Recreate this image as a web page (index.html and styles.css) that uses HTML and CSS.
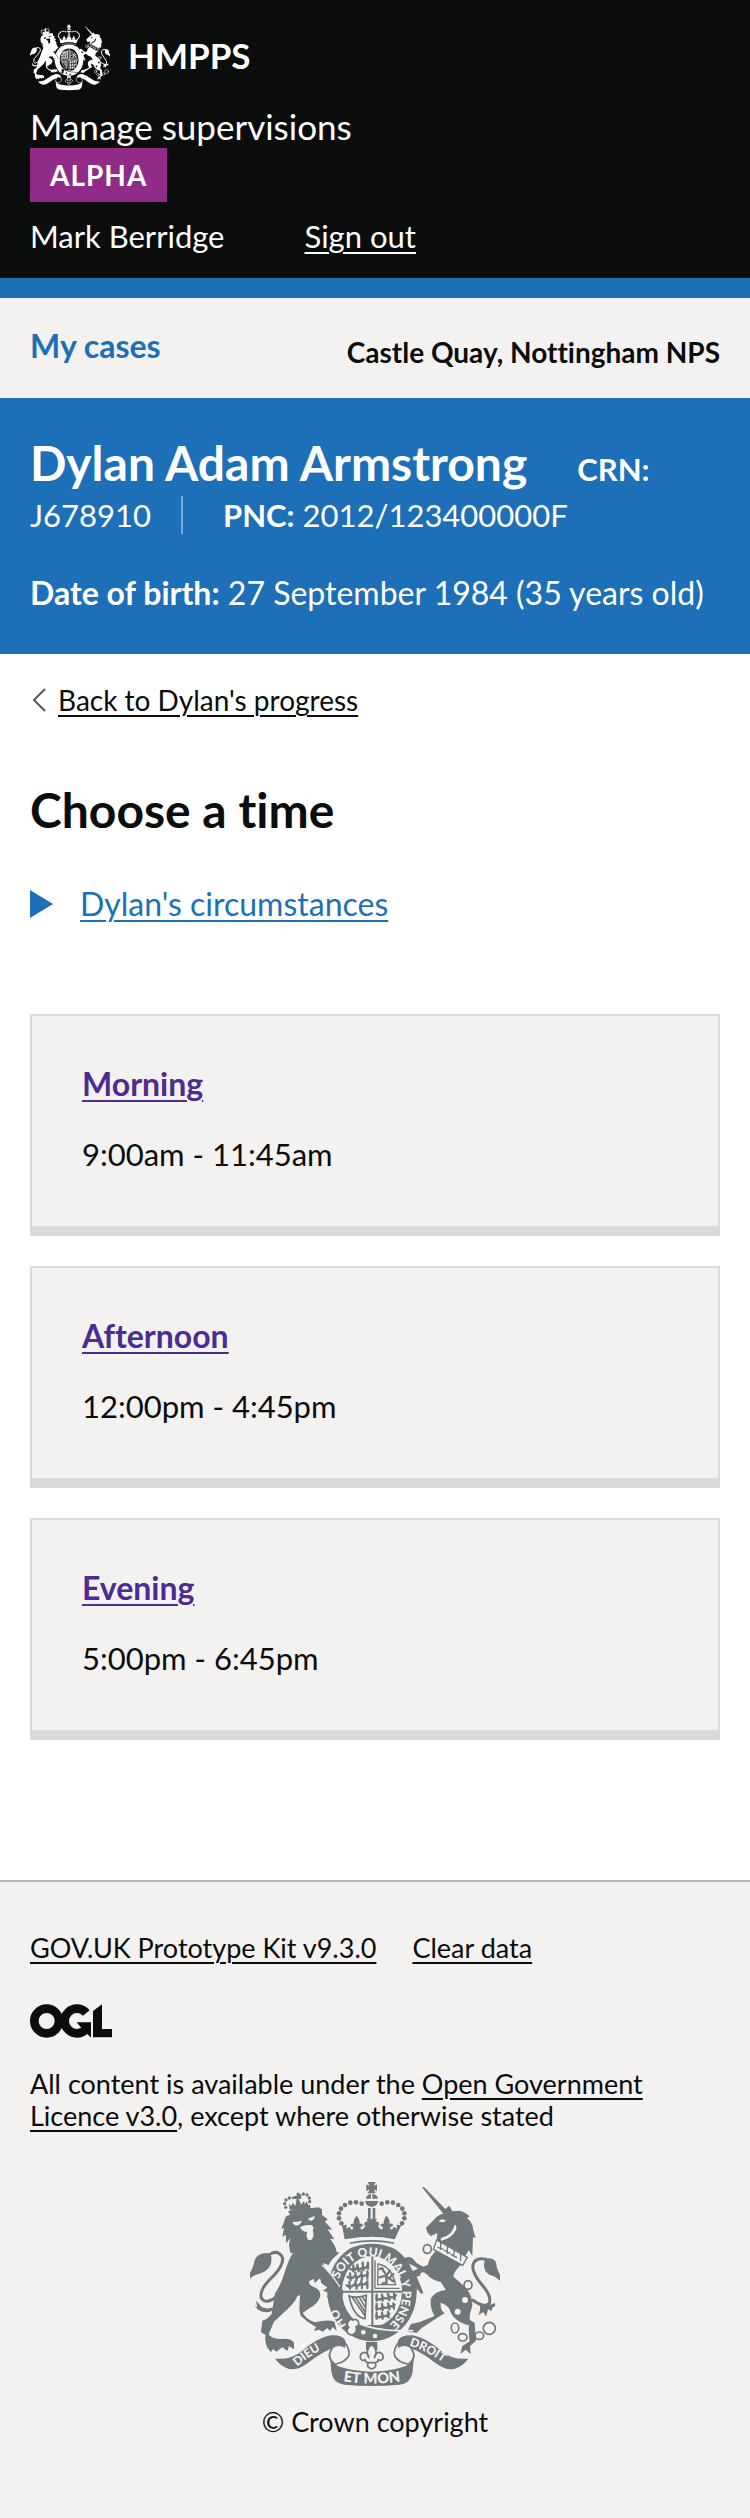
FILE: index.html
```html
<!DOCTYPE html>
<html lang="en">
<head>
<meta charset="utf-8">
<meta name="viewport" content="width=device-width, initial-scale=1">
<title>Choose a time - Manage supervisions</title>
<link rel="stylesheet" href="styles.css">
</head>
<body>
<svg class="sprite" aria-hidden="true">
  <defs>
    <symbol id="crest" viewBox="30 36 750 612">
      <g class="crest-ink">
        <!-- crown -->
        <path d="M383 36h24l-6 12 10-5v20l-10-5 6 12h-24l6-12-10 5V43l10 5zM378 86q1-12 15-15v15zM397 71q15 3 17 15h-17zM375 93h40q-3 16-20 18-17-2-20-18zM384 114h8v32h-8zM398 114h8v32h-8z"/>
        <g><circle cx="365" cy="101" r="7"/><circle cx="348" cy="97" r="7"/><circle cx="331" cy="98" r="7"/><circle cx="315" cy="105" r="7"/><circle cx="303" cy="116" r="7"/><circle cx="297" cy="130" r="7"/><circle cx="297" cy="145" r="7"/><circle cx="304" cy="160" r="7"/><circle cx="425" cy="101" r="7"/><circle cx="442" cy="97" r="7"/><circle cx="459" cy="98" r="7"/><circle cx="475" cy="105" r="7"/><circle cx="487" cy="116" r="7"/><circle cx="493" cy="130" r="7"/><circle cx="493" cy="145" r="7"/><circle cx="486" cy="160" r="7"/></g>
        <path d="M306 166l14-2-1 12 10-6q2 8 8 9 3-4 2-9-6 2-8-4 2-8 10-4-2-12 9-25 11 13 9 25 8-4 10 4-2 6-8 4 0 6 4 9 9-4 12-14l-4 2v-9q5-4 11-3l-5-9h32l-5 9q6-1 11 3v9l-4-2q3 10 12 14 4-3 4-9-6 2-8-4 2-8 10-4-2-12 9-25 11 13 9 25 8-4 10 4-2 6-8 4-1 5 2 9 6-1 8-9l10 6-1-12 14 2-20 42q-75-14-150 0z"/>
        <!-- belt -->
        <ellipse cx="396" cy="365" rx="134" ry="149"/>
      </g>
      <g class="crest-paper">
        <path d="M322 210q74-20 146 0 8 14 0 28-72-34-146 0-8-14 0-28z"/>
        <ellipse cx="396" cy="364" rx="90" ry="106"/>
        <circle cx="370" cy="487" r="7"/><circle cx="405" cy="498" r="7"/>
      </g>
      <path class="crest-line" d="M332 219q64-13 128 0" stroke-width="5"/>
      <!-- shield -->
      <path class="crest-line" d="M397 262v202M308 365h176M374 468h46" stroke-width="6"/>
      <path class="crest-line" d="M405 272v82M405 355h72M414 282q40 6 53 62h-54z" stroke-width="4"/>
      <g class="crest-line" stroke-width="7">
        <path d="M330 296q12 10 20-2 10 8 18-2 10 6 14-6M340 286v18M352 284l4 20M368 278l2 22M384 278v18"/>
        <path d="M322 320q12 10 22-2 10 8 18-2 14 6 22-6M330 310l2 20M346 308l4 22M364 304l2 24M382 304v22"/>
        <path d="M320 346q12 10 22-2 10 8 18-2 14 6 22-6M328 336l2 20M346 334l4 22M364 332l2 22M382 334v20"/>
        <path d="M408 384q12 10 20-2 12 8 20-2 12 6 20-4M410 374v18M426 374l2 18M444 372l4 18M462 372l2 16"/>
        <path d="M408 412q12 10 20-2 12 8 20-2 10 4 16-4M410 402v18M426 402l2 18M444 400l4 18M460 400l2 16"/>
        <path d="M408 438q12 8 20-2 10 6 20-4M410 428v18M426 428l2 18M444 426l2 16"/>
        <path d="M420 298q8-8 10 4l10 14 10-14M432 318l-14 4M438 318l2 20-12 2M442 322l18 12M452 320l8-8"/>
      </g>
      <path class="crest-line" d="M327 378q24 8 52-2l-4 70q-34-4-48-68zM338 384l36 52M348 384l27 42M358 382l18 30M367 380l10 16" stroke-width="5"/>
      <!-- lion -->
      <g class="crest-ink">
        <path d="M131 158l6-18q46-24 99-28l10 6v17l17 13-8 7 22 24-14-1 20 30-13-2q18 22 20 40l12 3q-22 10-36 36l-18-6 14 24q26 20 36 42l12 18-3 22-10-5 1 18-12-14-9 9-3-14-14 3 6-14-18-6 14-9-18-14-4-14-16 14-2-12-14 6q-4 12 18 20 18 8 14 28-6 20-32 34l-20 14q14 22 38 28 36-10 58-2l6 28-12-12-8 12-8-9-14 11-10-6-16 4 6-12q-24-12-46-34l-4-18 2-44-8 4q-10 24-38 46l-32 30-16 38q6 12 34 14 34-4 42 11v20l-15-10-5 15-15-11-18 13-10-8-6 10-12-15q-8-24-4-36l-14-10 4-34 14-6 14-14 10-62q20-30 28-60 12-40 26-62l-8 2-4-26 4-20-12 16-2-26-10 6 5-26-8 2 8-20z"/>
        <path d="M92 250q-36-6-48 20-4 24-14 38v18q8-10 26-14 26-8 34-24 6-14 4-28zM108 408q-20 12-42 4l-18-20 4 20-8-6q12 22 32 20 20 4 32-18z"/>
        <path d="M144 124q30-14 66-20l2 14q-32 4-62 16zM150 120l-4-18 8 6 4-10 8 10 4-20-8-2v-8h8v-10h8v10h6v8l-8 2 8 16 6-10 6 8 4-8 6 14z"/>
        <g><circle cx="137" cy="112" r="5"/><circle cx="134" cy="101" r="5"/><circle cx="138" cy="90" r="5"/><circle cx="148" cy="84" r="5"/><circle cx="159" cy="84" r="4"/><circle cx="180" cy="76" r="4"/><circle cx="190" cy="72" r="5"/><circle cx="201" cy="75" r="5"/><circle cx="208" cy="84" r="5"/><circle cx="209" cy="95" r="5"/></g>
      </g>
      <path class="crest-line" d="M94 250q24-10 34 14 2 22-26 52-46 42-38 68 14 22 48-6" stroke-width="9"/>
      <path class="crest-paper" d="M158 156q14 0 28-4-6 16-20 14-8-2-8-10zM204 146l20-8q0 12-10 14-8 0-10-6zM180 172q16-10 36-6 8 8 2 14 6 14-1 26-6 8-14 2-6-10-2-22-16-2-21-14z"/>
      <path class="crest-gap" d="M246 285q24 20 54 66M270 280l34-36" stroke-width="4"/>
      <!-- unicorn -->
      <g class="crest-ink">
        <path d="M546 52l6-1 64 66 12-10 9 17 22-2q20 6 30 17l-8 5q18 16 18 32l8 28-8-3-2 56-11-16-10 16-86-48 2-20-20 10-10-12-4-14 26-26q8-12 26-16z"/>
        <path d="M584 238l80 46q-22 18-24 36 20 15 44 42 16 24 12 50-10 26-6 38l14 8 4 54-18 16 2 25-15-14-16 14 6-25 22-14q-4-26-2-48-50-14-59-50-10-14-26-18-2 24 12 32l-14 8-55 36-14 14-30-2 12-24 26-6 45-18q-14-20-12-52 12-22 46-26l-16-24q-28-6-42-24l-30 8 20 48-6 4-12-14-12 12-4-16-12-8-10-24-16-6 4-12 14 8 38-16q-20-14-34-16l-14 8 10-14-8-8q26-14 40 12l22 12 14-6q4-24 26-44z"/>
        <path d="M736 266q34-6 34 24 4 14 10 24v18q-18-16-32-18-24-16-12-48zM738 402q14 6 26-4l2 10q-14 6-10 16l-12-6-6 22-8-14-16 10q8-10 6-28z"/>
      </g>
      <path class="crest-line" d="M738 268q-36-8-40 22 2 24 26 52 32 36 24 58-14 16-50-10" stroke-width="9"/>
      <path class="crest-paper" d="M596 154q10-12 22-2-8 8-22 2zM644 164q8 2 4 16-14 26-44 32-6-4 4-10 30-8 36-38zM590 210l92 52-14 24-88-48z"/>
      <path class="crest-line" d="M590 210l92 52-14 24-88-48zM602 218v20M594 232l16 6M622 230v20M614 242l16 8M642 240v20M634 254l16 8M662 252v20" stroke-width="4"/>
      <g class="crest-line" stroke-width="5"><ellipse cx="562" cy="237" rx="12" ry="13"/><ellipse cx="684" cy="345" rx="12" ry="13"/><ellipse cx="645" cy="474" rx="11" ry="15"/><ellipse cx="668" cy="502" rx="13" ry="11"/><ellipse cx="718" cy="497" rx="13" ry="11"/><circle cx="748" cy="475" r="18"/></g>
      <g class="crest-paper"><circle cx="542" cy="260" r="9"/><ellipse cx="549" cy="319" rx="9" ry="12"/><circle cx="675" cy="390" r="9"/><circle cx="653" cy="425" r="9"/></g>
      <!-- buckle and strap -->
      <path class="crest-gap" d="M340 452q60 34 180 30" stroke-width="5"/>
      <path class="crest-badge" d="M338 450q14-6 18 8 2 10-8 12 4 10-2 18-8 10-20 4-10-10 0-20-8-10 0-20 6-6 12-2z"/>
      <!-- ribbons -->
      <g id="ribbon-end">
        <path class="crest-ink" d="M105 566q50 4 82-24 44-38 84-46 36-2 44 14 4 12 0 24-18-12-36 0-40 16-74 44-36 26-60 18-24-8-40-30z"/>
        <path class="crest-line" d="M312 514q20 26 14 44-12 20-40 24M276 536q-18 24 6 44" stroke-width="5"/>
      </g>
      <use href="#ribbon-end" transform="matrix(-1 0 0 1 790 0)"/>
      <path class="crest-ink" d="M270 560q6 22 34 32 92 26 182 0 30-10 36-32l-4 44q-6 38-40 40-82 8-166 0-34-4-38-40zM378 516h34v24h-34z"/>
      <path class="crest-badge" d="M395 522q22 22 8 42 2-16 14-17 14 2 12 18-6 10-14 4-1 8-10 10 8 12-10 18-18-6-10-18-9-2-10-10-8 6-14-4-2-16 12-18 12 1 14 17-14-20 8-42zM382 578h26"/>
    </symbol>
    <path id="motto-oval" d="M297 328A99 114 0 1 1 436 472"/>
    <path id="motto-hon" d="M319 466A104 119 0 0 1 290 376"/>
    <path id="motto-left" d="M172 590Q220 545 285 523"/>
    <path id="motto-mid" d="M310 634Q395 648 500 632"/>
    <path id="motto-right" d="M508 527Q570 545 630 594"/>
  </defs>
</svg>

<header class="header">
  <a class="header-logo" href="#">
    <svg class="header-crest" viewBox="0 0 80 67" aria-hidden="true"><use href="#crest"/></svg>
    <span class="header-org">HMPPS</span>
  </a>
  <a class="header-service" href="#">Manage supervisions</a>
  <strong class="tag">Alpha</strong>
  <div class="header-user">
    <span>Mark Berridge</span>
    <a class="header-signout" href="#">Sign out</a>
  </div>
</header>

<nav class="subnav" aria-label="Primary">
  <a class="subnav-link" href="#">My cases</a>
  <span class="subnav-place">Castle Quay, Nottingham NPS</span>
</nav>

<section class="person" aria-label="Person on probation">
  <div class="person-line">
    <h2 class="person-name">Dylan Adam Armstrong</h2>
    <span class="person-crn"><b>CRN:</b> J678910</span><span><b>PNC:</b> 2012/123400000F</span>
  </div>
  <p class="person-dob"><b>Date of birth:</b> 27 September 1984 (35 years old)</p>
</section>

<main class="main">
  <a class="back" href="#">
    <svg class="back-icon" viewBox="0 0 14 24" aria-hidden="true"><path d="M13 1L2 12l11 11"/></svg>
    <span class="back-text">Back to Dylan's progress</span>
  </a>
  <h1 class="title">Choose a time</h1>
  <details class="details">
    <summary class="summary">
      <svg class="summary-icon" viewBox="0 0 23 28" aria-hidden="true"><path d="M0 0l23 14L0 28z"/></svg>
      <span class="summary-text">Dylan's circumstances</span>
    </summary>
  </details>
  <ul class="cards">
    <li class="card"><a class="card-link" href="#">Morning</a><p class="card-time">9:00am - 11:45am</p></li>
    <li class="card"><a class="card-link" href="#">Afternoon</a><p class="card-time">12:00pm - 4:45pm</p></li>
    <li class="card"><a class="card-link" href="#">Evening</a><p class="card-time">5:00pm - 6:45pm</p></li>
  </ul>
</main>

<footer class="footer">
  <div class="footer-links">
    <a class="footer-link" href="#">GOV.UK Prototype Kit v9.3.0</a>
    <a class="footer-link" href="#">Clear data</a>
  </div>
  <svg class="ogl" viewBox="30 42 246 102" role="img" aria-label="Open Government Licence">
    <circle class="ogl-ring" cx="80" cy="93" r="37"/>
    <path class="ogl-ring" d="M199 69A37 37 0 1 0 199 117"/>
    <path d="M170 97h43v46l-14-14-14-14zM219 63l27-20v74h30v25h-57z"/>
  </svg>
  <p class="licence">All content is available under the <a class="footer-link" href="#">Open Government Licence v3.0</a>, except where otherwise stated</p>
  <a class="copyright" href="#">
    <svg class="footer-crest" viewBox="30 36 750 612" aria-hidden="true">
      <use href="#crest" x="30" y="36" width="750" height="612"/>
      <g class="motto">
        <text><textPath href="#motto-oval">SOIT QUI MAL Y PENSE</textPath></text>
        <text><textPath href="#motto-hon">HO</textPath></text>
        <text><textPath href="#motto-left">DIEU</textPath></text>
        <text class="motto-mid"><textPath href="#motto-mid">ET MON</textPath></text>
        <text><textPath href="#motto-right">DROIT</textPath></text>
      </g>
    </svg>
    <span>© Crown copyright</span>
  </a>
</footer>
</body>
</html>
```
FILE: styles.css
```css
:root {
  --ink: #0b0c0c;
  --blue: #1d70b8;
  --paper: #f3f2f1;
  --edge: 30px;
}

* { box-sizing: border-box; }

body {
  margin: 0;
  background: #fff;
  color: var(--ink);
  font-family: Lato, "Liberation Sans", sans-serif;
  font-size: 32px;
  font-variant-ligatures: none;
  line-height: 40px;
}

h1, h2, p, ul { margin: 0; padding: 0; }
a { color: inherit; text-decoration-thickness: 2px; text-underline-offset: 4px; }

.sprite { position: absolute; width: 0; height: 0; }
.crest-ink { fill: currentColor; }
.crest-paper { fill: var(--crest-paper); }
.crest-line { fill: none; stroke: currentColor; stroke-linecap: round; }
.crest-gap { fill: none; stroke: var(--crest-paper); }
.crest-badge { fill: var(--crest-paper); stroke: currentColor; stroke-width: 5px; }

.header {
  padding: 24px var(--edge) 22px;
  border-bottom: 20px solid var(--blue);
  background: var(--ink);
  color: #fff;
}
.header-logo { display: flex; align-items: center; gap: 18px; text-decoration: none; }
.header-crest { --crest-paper: var(--ink); width: 80px; height: 67px; }
.header-org { padding-bottom: 6px; font-size: 35px; font-weight: 700; }
.header-service { display: block; margin-top: 15px; font-size: 35px; text-decoration: none; }
.tag {
  display: block;
  width: fit-content;
  margin-top: 2px;
  padding: 7px 20px;
  background: #912b88;
  font-size: 28px;
  letter-spacing: 1px;
  text-transform: uppercase;
}
.header-user { display: flex; gap: 80px; margin-top: 14px; font-size: 31px; }

.subnav {
  display: flex;
  justify-content: space-between;
  align-items: flex-start;
  padding: 28px var(--edge) 26px;
  background: var(--paper);
  font-weight: 700;
}
.subnav-link { color: var(--blue); text-decoration: none; }
.subnav-place { padding-top: 6px; font-size: 28px; }

.person {
  padding: 42px var(--edge) 38px;
  background: var(--blue);
  color: #fff;
  line-height: 46px;
}
.person-line { font-size: 31px; }
.person-name { display: inline; margin-right: 42px; font-size: 48px; }
.person-crn { margin-right: 40px; padding-right: 30px; border-right: 2px solid #77a9d4; }
.person-dob { margin-top: 32px; }

.main { padding: 29px var(--edge) 140px; }
.back { display: flex; align-items: center; gap: 12px; width: fit-content; font-size: 28px; line-height: 34px; text-decoration: none; }
.back-icon { width: 14px; height: 24px; margin-left: 2px; fill: none; stroke: #505a5f; stroke-width: 2px; }
.back-text { text-decoration: underline 2px; text-underline-offset: 4px; }
.title { margin-top: 65px; font-size: 48px; line-height: 56px; }
.details { margin-top: 46px; color: var(--blue); }
.summary { display: flex; align-items: center; gap: 27px; width: fit-content; list-style: none; cursor: pointer; }
.summary-icon { width: 23px; height: 28px; fill: var(--blue); }
.summary-text { text-decoration: underline 2px; text-underline-offset: 4px; }

.cards { display: grid; gap: 30px; margin-top: 90px; list-style: none; }
.card { padding: 48px 50px 52px; border: 2px solid #d8dadc; border-bottom-width: 10px; background: var(--paper); }
.card-link { color: #4c2c92; font-weight: 700; }
.card-time { margin-top: 30px; font-size: 31px; }

.footer {
  padding: 50px var(--edge) 80px;
  border-top: 2px solid #b1b4b6;
  background: var(--paper);
  font-size: 27px;
  line-height: 32px;
}
.footer-links { display: flex; gap: 36px; }
.footer-link { text-underline-offset: 4px; }
.ogl { display: block; width: 82px; height: 34px; margin-top: 40px; fill: var(--ink); }
.ogl-ring { fill: none; stroke: var(--ink); stroke-width: 26px; }
.licence { margin-top: 30px; }
.copyright { display: flex; flex-direction: column; align-items: center; gap: 20px; margin-top: 50px; text-decoration: none; }
.footer-crest { --crest-paper: var(--paper); width: 250px; height: 204px; color: #6f777b; }
.motto { fill: var(--paper); font-size: 36px; font-weight: 900; }
.motto-mid { font-size: 44px; }
```
